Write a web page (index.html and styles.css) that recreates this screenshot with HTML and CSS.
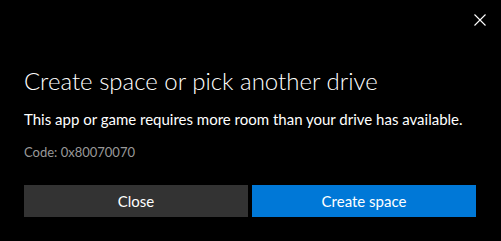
FILE: index.html
```html
<!DOCTYPE html>
<html>
<head>
<meta charset="utf-8">
<link rel="stylesheet" href="styles.css">
</head>
<body>
<div class="dialog">
  <div class="topbar">
    <span class="close-x" aria-label="Close">
      <svg width="12" height="12" viewBox="0 0 12 12"><path d="M0.5 0.5 L11.5 11.5 M11.5 0.5 L0.5 11.5" stroke="#ffffff" stroke-width="1.1" fill="none"/></svg>
    </span>
  </div>
  <h1 class="title">Create space or pick another drive</h1>
  <p class="message">This app or game requires more room than your drive has available.</p>
  <p class="code">Code: 0x80070070</p>
  <div class="actions">
    <button class="btn btn-secondary">Close</button>
    <button class="btn btn-primary">Create space</button>
  </div>
</div>
</body>
</html>
```
FILE: styles.css
```css
html, body {
  margin: 0;
  padding: 0;
  background: #000000;
}
.dialog {
  box-sizing: border-box;
  width: 501px;
  height: 241px;
  padding: 0 25px 0 24px;
  font-family: "Lato", "Open Sans", sans-serif;
  color: #ffffff;
  display: flex;
  flex-direction: column;
}
.topbar {
  display: flex;
  justify-content: flex-end;
  padding-top: 14px;
  height: 65px;
  box-sizing: border-box;
  margin-right: -10px;
  flex-shrink: 0;
}
.close-x {
  display: block;
  width: 12px;
  height: 12px;
}
.close-x svg {
  display: block;
}
.title {
  margin: 0;
  font-size: 24px;
  line-height: 32px;
  font-weight: 300;
  white-space: nowrap;
}
.message {
  margin: 12px 0 0;
  font-size: 15px;
  line-height: 20px;
  white-space: nowrap;
}
.code {
  margin: 14px 0 0;
  font-size: 13px;
  line-height: 18px;
  color: #999999;
}
.actions {
  margin-top: 24px;
  display: flex;
  gap: 4px;
  flex-shrink: 0;
}
.btn {
  flex: 1;
  height: 32px;
  border: 0;
  margin: 0;
  padding: 0;
  font-family: "Lato", "Open Sans", sans-serif;
  font-size: 15px;
  line-height: 32px;
  color: #ffffff;
}
.btn-secondary {
  background: #333333;
}
.btn-primary {
  background: #0078d7;
}
```
